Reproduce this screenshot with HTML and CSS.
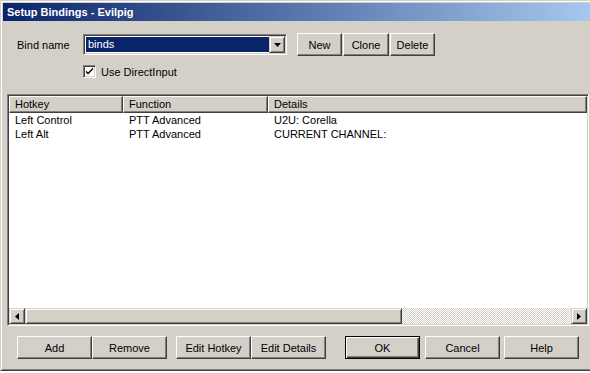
FILE: index.html
```html
<!DOCTYPE html>
<html lang="en">
<head>
    <meta charset="UTF-8">
    <meta name="viewport" content="width=device-width, initial-scale=1.0">
    <title>Setup Bindings - Evilpig</title>
    <link rel="stylesheet" href="styles.css">
</head>
<body>
    <div class="window">
        <div class="titlebar">Setup Bindings - Evilpig</div>
        <div class="dialog">
            <div class="bind-row">
                <label class="bind-label">Bind name</label>
                <div class="combo">
                    <div class="combo-value">binds</div>
                    <div class="combo-btn">
                        <svg width="7" height="4" viewBox="0 0 7 4"><path d="M0 0h7L3.5 4z" fill="#000"/></svg>
                    </div>
                </div>
                <div class="top-buttons">
                    <button class="btn btn-small">New</button>
                    <button class="btn btn-small">Clone</button>
                    <button class="btn btn-small">Delete</button>
                </div>
            </div>

            <div class="check-row">
                <span class="checkbox">
                    <svg width="9" height="9" viewBox="0 0 9 9"><path d="M1 3.5l2 2 5-5v2l-5 5-2-2z" fill="#000"/></svg>
                </span>
                <span>Use DirectInput</span>
            </div>

            <div class="listview">
                <div class="lv-header">
                    <div class="lv-col col-hotkey">Hotkey</div>
                    <div class="lv-col col-function">Function</div>
                    <div class="lv-col col-details">Details</div>
                </div>
                <div class="lv-rows">
                    <div class="lv-row">
                        <div class="lv-cell col-hotkey">Left Control</div>
                        <div class="lv-cell col-function">PTT Advanced</div>
                        <div class="lv-cell col-details">U2U: Corella</div>
                    </div>
                    <div class="lv-row">
                        <div class="lv-cell col-hotkey">Left Alt</div>
                        <div class="lv-cell col-function">PTT Advanced</div>
                        <div class="lv-cell col-details">CURRENT CHANNEL:</div>
                    </div>
                </div>
                <div class="hscroll">
                    <div class="scroll-btn">
                        <svg width="4" height="7" viewBox="0 0 4 7"><path d="M4 0v7L0 3.5z" fill="#000"/></svg>
                    </div>
                    <div class="scroll-thumb"></div>
                    <div class="scroll-track"></div>
                    <div class="scroll-btn">
                        <svg width="4" height="7" viewBox="0 0 4 7"><path d="M0 0v7l4-3.5z" fill="#000"/></svg>
                    </div>
                </div>
            </div>

            <div class="bottom-buttons">
                <button class="btn">Add</button>
                <button class="btn">Remove</button>
                <button class="btn gap-edit">Edit Hotkey</button>
                <button class="btn">Edit Details</button>
                <button class="btn btn-default gap-ok">OK</button>
                <button class="btn gap-cancel">Cancel</button>
                <button class="btn gap-help">Help</button>
            </div>
        </div>
    </div>
</body>
</html>
```

FILE: styles.css
```css
html {
    background: #ffffff;
}

body {
    margin: 0;
    font-family: "Liberation Sans", Arial, sans-serif;
    font-size: 11px;
    color: #000;
    overflow: hidden;
}

.window {
    box-sizing: border-box;
    width: 600px;
    height: 371px;
    background: #d4d0c8;
    border: 1px solid;
    border-color: #d4d0c8 #404040 #404040 #d4d0c8;
    box-shadow: inset 1px 1px #ffffff, inset -1px -1px #808080;
    padding: 2px;
}

.titlebar {
    height: 18px;
    line-height: 18px;
    padding-left: 4px;
    color: #fff;
    font-weight: bold;
    background: linear-gradient(to right, #0a246a, #a6caf0);
}

.dialog {
    padding: 12px 0 0 4px;
}

.bind-row {
    display: flex;
    align-items: center;
    height: 23px;
    padding-left: 10px;
}

.bind-label {
    width: 66px;
}

.combo {
    box-sizing: border-box;
    display: flex;
    width: 204px;
    height: 21px;
    background: #fff;
    border: 1px solid;
    border-color: #808080 #fff #fff #808080;
    box-shadow: inset 1px 1px #404040, inset -1px -1px #d4d0c8;
    padding: 1px;
}

.combo-value {
    flex: 1;
    margin: 1px 0 1px 1px;
    padding-left: 2px;
    line-height: 15px;
    background: #0a246a;
    color: #fff;
}

.combo-btn {
    box-sizing: border-box;
    width: 16px;
    height: 17px;
    display: flex;
    align-items: center;
    justify-content: center;
    background: #d4d0c8;
    border: 1px solid;
    border-color: #d4d0c8 #404040 #404040 #d4d0c8;
    box-shadow: inset 1px 1px #fff, inset -1px -1px #808080;
}

.top-buttons {
    display: flex;
    gap: 1px;
    margin-left: 10px;
}

.btn {
    box-sizing: border-box;
    width: 75px;
    height: 23px;
    padding: 0;
    font-family: "Liberation Sans", Arial, sans-serif;
    font-size: 11px;
    color: #000;
    background: #d4d0c8;
    border: 1px solid;
    border-color: #fff #404040 #404040 #fff;
    box-shadow: inset -1px -1px #808080;
}

.btn-small {
    width: 45px;
}

.btn-small:nth-child(2) {
    width: 46px;
}

.btn-default {
    border-color: #000;
    box-shadow: inset 1px 1px #fff, inset -1px -1px #404040, inset -2px -2px #808080;
}

.gap-edit {
    margin-left: 9px;
}

.gap-ok {
    margin-left: 19px;
}

.gap-cancel {
    margin-left: 5px;
}

.gap-help {
    margin-left: 4px;
}

.check-row {
    display: flex;
    align-items: center;
    height: 13px;
    margin: 9px 0 0 76px;
}

.checkbox {
    box-sizing: border-box;
    width: 13px;
    height: 13px;
    margin-right: 5px;
    display: flex;
    align-items: center;
    justify-content: center;
    background: #fff;
    border: 1px solid;
    border-color: #808080 #fff #fff #808080;
    box-shadow: inset 1px 1px #404040, inset -1px -1px #d4d0c8;
}

.listview {
    box-sizing: border-box;
    display: flex;
    flex-direction: column;
    width: 582px;
    height: 232px;
    margin-top: 16px;
    background: #fff;
    border: 1px solid;
    border-color: #808080 #fff #fff #808080;
    box-shadow: inset 1px 1px #404040, inset -1px -1px #d4d0c8;
    padding: 1px;
}

.lv-header {
    display: flex;
    height: 17px;
    background: #d4d0c8;
}

.lv-col {
    box-sizing: border-box;
    height: 17px;
    line-height: 15px;
    padding-left: 5px;
    border: 1px solid;
    border-color: #fff #404040 #404040 #fff;
    box-shadow: inset -1px -1px #808080;
}

.col-hotkey {
    width: 114px;
}

.col-function {
    width: 145px;
}

.col-details {
    flex: 1;
}

.lv-rows {
    flex: 1;
}

.lv-row {
    display: flex;
    height: 14px;
    line-height: 14px;
}

.lv-cell {
    box-sizing: border-box;
    padding-left: 6px;
    white-space: nowrap;
}

.hscroll {
    display: flex;
    height: 16px;
}

.scroll-btn,
.scroll-thumb {
    box-sizing: border-box;
    height: 16px;
    background: #d4d0c8;
    border: 1px solid;
    border-color: #d4d0c8 #404040 #404040 #d4d0c8;
    box-shadow: inset 1px 1px #fff, inset -1px -1px #808080;
}

.scroll-btn {
    width: 16px;
    display: flex;
    align-items: center;
    justify-content: center;
}

.scroll-thumb {
    width: 377px;
}

.scroll-track {
    flex: 1;
    background: repeating-conic-gradient(#d4d0c8 0 25%, #fff 0 50%) 0 0 / 2px 2px;
}

.bottom-buttons {
    display: flex;
    margin-top: 10px;
    padding-left: 10px;
}
```
